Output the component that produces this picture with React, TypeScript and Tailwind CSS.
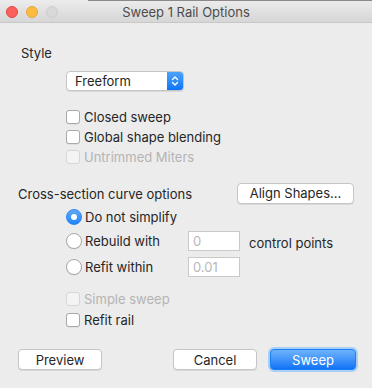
import React from "react";

const font = { fontFamily: 'Inter, "Liberation Sans", Arial, sans-serif' };

function Checkbox({ label, disabled }: { label: string; disabled?: boolean }) {
  return (
    <div className="flex h-[20px] items-center">
      <div
        className={
          disabled
            ? "h-[14px] w-[14px] rounded-[3px] border border-[#d6d6d6] bg-[#f4f4f4]"
            : "h-[14px] w-[14px] rounded-[3px] border border-[#a9a9a9] bg-white shadow-[0_0.5px_0.5px_rgba(0,0,0,0.1)]"
        }
      />
      <span className={disabled ? "ml-[4px] text-[#b4b4b4]" : "ml-[4px] text-[#262626]"}>{label}</span>
    </div>
  );
}

function Radio({ label, checked }: { label: string; checked?: boolean }) {
  return (
    <div className="flex items-center">
      {checked ? (
        <div className="flex h-[16px] w-[16px] items-center justify-center rounded-full bg-gradient-to-b from-[#5eaaf9] to-[#1b82fb] border border-[#2a86ef]">
          <div className="h-[6px] w-[6px] rounded-full bg-white" />
        </div>
      ) : (
        <div className="h-[16px] w-[16px] rounded-full border border-[#a9a9a9] bg-white shadow-[0_0.5px_0.5px_rgba(0,0,0,0.1)]" />
      )}
      <span className="ml-[3px] text-[#262626]">{label}</span>
    </div>
  );
}

function Btn({ label, w }: { label: string; w: string }) {
  return (
    <div
      className={`flex h-[21px] ${w} items-center justify-center rounded-[4px] border border-[#c5c5c5] bg-white text-[#262626] shadow-[0_1px_0.5px_rgba(0,0,0,0.08)]`}
    >
      {label}
    </div>
  );
}

export default function App() {
  return (
    <div className="h-[388px] w-[372px] overflow-hidden bg-[#ececec] text-[13px] leading-[20px]" style={font}>
      <div className="relative flex h-[23px] items-center justify-center border-b border-[#c8c8c8] bg-gradient-to-b from-[#ececec] to-[#d6d6d6]">
        <div className="absolute left-[88px] right-0 top-0 h-px bg-[#8a8a8a]" />
        <div className="absolute left-[6px] top-[6px] flex gap-[8px]">
          <div className="h-[12px] w-[12px] rounded-full border border-[#e2463f] bg-[#fc605c]" />
          <div className="h-[12px] w-[12px] rounded-full border border-[#e1a73e] bg-[#fdbc40]" />
          <div className="h-[12px] w-[12px] rounded-full border border-[#cccccc] bg-[#d8d8d8]" />
        </div>
        <span className="mt-[1px] text-[#4d4d4d]">Sweep 1 Rail Options</span>
      </div>

      <div className="flex flex-col">
        <div className="mt-[20px] flex h-[20px] items-center pl-[21px] text-[#262626]">Style</div>

        <div className="ml-[66px] mt-[8px] flex h-[20px] w-[118px] items-center overflow-hidden rounded-[4px] border border-[#c5c5c5] bg-white shadow-[0_1px_0.5px_rgba(0,0,0,0.08)]">
          <span className="flex-1 pl-[8px] text-[#262626]">Freeform</span>
          <div className="flex h-full w-[16px] items-center justify-center bg-gradient-to-b from-[#4ba3fb] to-[#0b74f8]">
            <svg width="8" height="12" viewBox="0 0 8 12" fill="none" stroke="white" strokeWidth="1.4" strokeLinecap="round" strokeLinejoin="round">
              <path d="M1.5 4.5 L4 2 L6.5 4.5" />
              <path d="M1.5 7.5 L4 10 L6.5 7.5" />
            </svg>
          </div>
        </div>

        <div className="ml-[66px] mt-[16px] flex flex-col">
          <Checkbox label="Closed sweep" />
          <Checkbox label="Global shape blending" />
          <Checkbox label="Untrimmed Miters" disabled />
        </div>

        <div className="mt-[16px] flex h-[20px] items-center pl-[18px] pr-[18px]">
          <span className="mt-[1px] flex-1 text-[#262626]">Cross-section curve options</span>
          <Btn label="Align Shapes..." w="w-[117px]" />
        </div>

        <div className="ml-[66px] mt-[4px] flex flex-col">
          <div className="flex h-[20px] items-center">
            <Radio label="Do not simplify" checked />
          </div>
          <div className="mt-[4px] flex h-[20px] items-center">
            <div className="w-[122px]">
              <Radio label="Rebuild with" />
            </div>
            <div className="flex h-[20px] w-[52px] items-center border border-[#c9c9c9] bg-white pl-[4px] text-[#b8b8b8]">0</div>
            <span className="ml-[9px] mt-[4px] text-[#262626]">control points</span>
          </div>
          <div className="mt-[6px] flex h-[20px] items-center">
            <div className="w-[122px]">
              <Radio label="Refit within" />
            </div>
            <div className="flex h-[20px] w-[52px] items-center border border-[#c9c9c9] bg-white pl-[4px] text-[#b8b8b8]">0.01</div>
          </div>
        </div>

        <div className="ml-[66px] mt-[12px] flex flex-col gap-[1px]">
          <Checkbox label="Simple sweep" disabled />
          <Checkbox label="Refit rail" />
        </div>

        <div className="mt-[17px] flex items-center pl-[18px]">
          <Btn label="Preview" w="w-[84px]" />
          <div className="ml-[71px]">
            <Btn label="Cancel" w="w-[84px]" />
          </div>
          <div className="ml-[11px] rounded-[6px] bg-[#a9cff7] p-[2px]">
            <div className="flex h-[21px] w-[86px] items-center justify-center rounded-[4px] border border-[#1a7ef5] bg-gradient-to-b from-[#6cb3fa] to-[#0c72f7] text-white">
              Sweep
            </div>
          </div>
        </div>
      </div>
    </div>
  );
}
